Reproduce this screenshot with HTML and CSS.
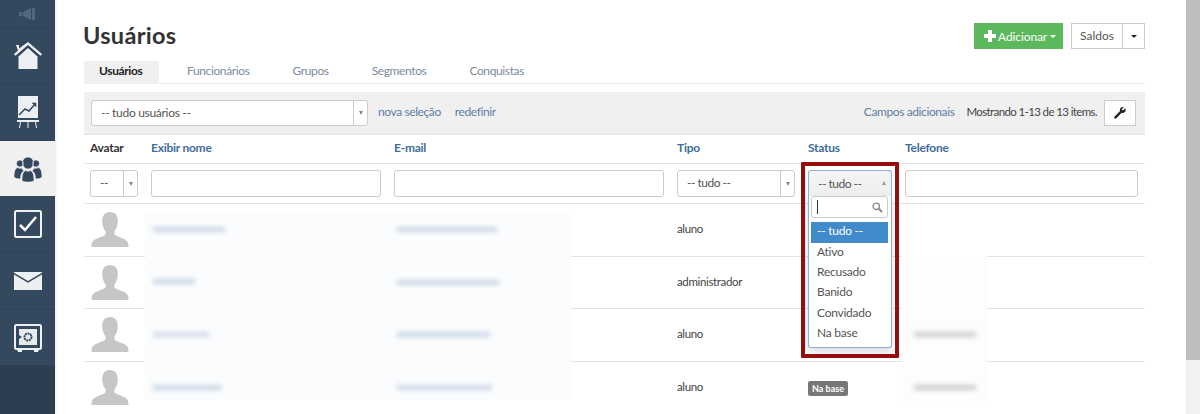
FILE: index.html
```html
<!DOCTYPE html>
<html lang="pt">
<head>
<meta charset="utf-8">
<title>Usuários</title>
<link rel="stylesheet" href="styles.css">
</head>
<body>
<div class="app">
  <nav class="sidebar">
    <div class="nav-item nav-top">
      <svg width="18" height="14" viewBox="0 0 18 14"><path class="ic-mute" d="M0 5h3v4H0zM4 5l8-4v12L4 9zM13 1h3v12h-3z"/></svg>
    </div>
    <div class="nav-item nav-home">
      <svg width="30" height="30" viewBox="0 0 30 30"><path class="ic-light" d="M3 4h3v3.5L15 1l14 12-1.500 1.800L15 4 2.500 14.800 1 13l4-3.400z"/><path class="ic-light" d="M5.500 15.500 15 7l9.500 8.500V28h-19z"/></svg>
    </div>
    <div class="nav-item nav-chart">
      <svg width="24" height="32" viewBox="0 0 24 32"><path class="ic-light" d="M2 0h20v22H2z"/><path class="ic-line" d="M3 19l6-6 4 2 6-7"/><path class="ic-line-thin" d="M16 7h4v4"/><path class="ic-light" d="M1 24h22v2H1zM4 26h1l-1 6H3zM11.500 26h1v6h-1zM19 26h1l1 6h-1z"/></svg>
    </div>
    <div class="nav-item nav-active">
      <svg width="30" height="26" viewBox="0 0 30 26"><path class="ic-dark" d="M7 4a3.500 3.500 0 1 1-.1 0zM23 4a3.500 3.500 0 1 1-.1 0zM15 1a5.500 5.500 0 0 1 5.500 6c0 3-2.500 6-5.500 6s-5.500-3-5.500-6A5.500 5.500 0 0 1 15 1z"/><path class="ic-dark" d="M1 21c0-5 1-9 4-9.500 1 1 3 1 3.800.5.700 1.500 1.500 2.500 2.200 3-2.500 1-3.500 4-3.500 8C4 23 2 22 1 21zM29 21c0-5-1-9-4-9.500-1 1-3 1-3.800.500-.7 1.500-1.500 2.500-2.200 3 2.500 1 3.500 4 3.500 8 3.500 0 5.500-1 6.500-2zM9 25c0-5 .5-9 3.500-10.500 1.500 1 3.500 1 5 0C20.500 16 21 20 21 25c-3 1.500-9 1.500-12 0z"/></svg>
    </div>
    <div class="nav-item nav-task">
      <svg width="28" height="28" viewBox="0 0 28 28"><rect class="ic-box" x="1" y="1" width="26" height="26" rx="1.500"/><path class="ic-check" d="M6 15l5 5L22 7"/></svg>
    </div>
    <div class="nav-item nav-mail">
      <svg width="28" height="18" viewBox="0 0 28 18"><path class="ic-light" d="M0 0h28v18H0z"/><path class="ic-v" d="M-1 1l15 9 15-9"/></svg>
    </div>
    <div class="nav-item nav-safe">
      <svg width="28" height="28" viewBox="0 0 28 28"><rect class="ic-safe" x="1" y="1" width="26" height="24" rx="1.500"/><rect class="ic-safe-in" x="5" y="5" width="18" height="16"/><circle class="ic-gear" cx="14" cy="13" r="3.500"/><path class="ic-dark-fill" d="M5 11l3 2-3 2z"/><path class="ic-light" d="M3 25h5v3H4zM20 25h5l-1 3h-4z"/></svg>
    </div>
  </nav>

  <main class="content">
    <header class="page-head">
      <h1 class="title">Usuários</h1>
      <div class="head-actions">
        <button class="btn-add">
          <svg width="12" height="12" viewBox="0 0 12 12"><path class="ic-white" d="M4 0h4v4h4v4H8v4H4V8H0V4h4z"/></svg>
          <span>Adicionar</span><i class="caret-white"></i>
        </button>
        <div class="split">
          <span class="split-main">Saldos</span>
          <span class="split-caret"><i class="caret-black"></i></span>
        </div>
      </div>
    </header>

    <ul class="tabs">
      <li class="tab tab-active">Usuários</li>
      <li class="tab">Funcionários</li>
      <li class="tab">Grupos</li>
      <li class="tab">Segmentos</li>
      <li class="tab">Conquistas</li>
    </ul>

    <section class="toolbar">
      <div class="select select-main">
        <span class="select-text">-- tudo usuários --</span>
        <span class="select-arrow"><i class="caret-gray"></i></span>
      </div>
      <a class="link link-first">nova seleção</a>
      <a class="link">redefinir</a>
      <div class="toolbar-right">
        <a class="link">Campos adicionais</a>
        <span class="summary">Mostrando 1-13 de 13 items.</span>
        <button class="btn-tool">
          <svg width="12" height="12" viewBox="0 0 14 14"><path class="ic-black" d="M13 1.500 10.500 4 9.500 3.500 9 2.500 11.500.2C9.500-.4 7.500.6 7 2.500c-.2.800-.1 1.500.1 2.200L.8 11c-.8.8-.8 1.500-.2 2.100.7.700 1.400.6 2.100-.1L9 6.700c2 .7 4-.3 4.500-2.300.2-.9 0-2-.5-2.900z"/></svg>
        </button>
      </div>
    </section>

    <section class="grid">
      <div class="grid-row head-row">
        <div class="th th-plain">Avatar</div>
        <div class="th">Exibir nome</div>
        <div class="th">E-mail</div>
        <div class="th">Tipo</div>
        <div class="th">Status</div>
        <div class="th">Telefone</div>
      </div>
      <div class="grid-row filter-row">
        <div class="cell"><div class="select select-small"><span class="select-text">--</span><span class="select-arrow"><i class="caret-gray"></i></span></div></div>
        <div class="cell"><div class="input"></div></div>
        <div class="cell"><div class="input"></div></div>
        <div class="cell"><div class="select"><span class="select-text">-- tudo --</span><span class="select-arrow"><i class="caret-gray"></i></span></div></div>
        <div class="cell"></div>
        <div class="cell"><div class="input input-last"></div></div>
      </div>
      <div class="grid-row body-row">
        <div class="cell"><svg class="avatar" viewBox="0 0 38 36"><path d="M19 0c5.500 0 8 4 8 9.500 0 4-1.500 8-3.500 10.500v3c1 1.500 4 2.500 8 4 4 1.500 6 3 6.500 6.500V36H0v-2.500c.5-3.500 2.500-5 6.500-6.500s7-2.500 8-4v-3C12.500 17.500 11 13.500 11 9.500 11 4 13.500 0 19 0z"/></svg></div>
        <div class="cell"></div><div class="cell"></div>
        <div class="cell cell-text">aluno</div>
      </div>
      <div class="grid-row body-row">
        <div class="cell"><svg class="avatar" viewBox="0 0 38 36"><path d="M19 0c5.500 0 8 4 8 9.500 0 4-1.500 8-3.500 10.500v3c1 1.500 4 2.500 8 4 4 1.500 6 3 6.500 6.500V36H0v-2.500c.5-3.500 2.500-5 6.500-6.500s7-2.500 8-4v-3C12.500 17.500 11 13.500 11 9.500 11 4 13.500 0 19 0z"/></svg></div>
        <div class="cell"></div><div class="cell"></div>
        <div class="cell cell-text">administrador</div>
      </div>
      <div class="grid-row body-row">
        <div class="cell"><svg class="avatar" viewBox="0 0 38 36"><path d="M19 0c5.500 0 8 4 8 9.500 0 4-1.500 8-3.500 10.500v3c1 1.500 4 2.500 8 4 4 1.500 6 3 6.500 6.500V36H0v-2.500c.5-3.500 2.500-5 6.500-6.500s7-2.500 8-4v-3C12.500 17.500 11 13.500 11 9.500 11 4 13.500 0 19 0z"/></svg></div>
        <div class="cell"></div><div class="cell"></div>
        <div class="cell cell-text">aluno</div>
      </div>
      <div class="grid-row body-row">
        <div class="cell"><svg class="avatar" viewBox="0 0 38 36"><path d="M19 0c5.500 0 8 4 8 9.500 0 4-1.500 8-3.500 10.500v3c1 1.500 4 2.500 8 4 4 1.500 6 3 6.500 6.500V36H0v-2.500c.5-3.500 2.500-5 6.500-6.500s7-2.500 8-4v-3C12.500 17.500 11 13.500 11 9.500 11 4 13.500 0 19 0z"/></svg></div>
        <div class="cell"></div><div class="cell"></div>
        <div class="cell cell-text">aluno</div>
        <div class="cell cell-text"><span class="badge">Na base</span></div>
      </div>

      <div class="mask mask-left">
        <i class="smear s1"></i><i class="smear s2"></i>
        <i class="smear s3"></i><i class="smear s4"></i>
        <i class="smear s5"></i><i class="smear s6"></i>
        <i class="smear s7"></i><i class="smear s8"></i>
      </div>
      <div class="mask mask-right">
        <i class="smear p1"></i><i class="smear p2"></i>
      </div>

      <div class="status-select">
        <div class="status-head"><span>-- tudo --</span><i class="caret-up"></i></div>
        <div class="status-panel">
          <div class="status-search">
            <i class="cursor"></i>
            <svg width="11" height="11" viewBox="0 0 11 11"><circle class="ic-search" cx="4.300" cy="4.300" r="3.200"/><path class="ic-search-h" d="M6.800 6.800 10 10"/></svg>
          </div>
          <ul class="status-list">
            <li class="opt opt-on">-- tudo --</li>
            <li class="opt">Ativo</li>
            <li class="opt">Recusado</li>
            <li class="opt">Banido</li>
            <li class="opt">Convidado</li>
            <li class="opt">Na base</li>
          </ul>
        </div>
      </div>
      <div class="annot"></div>
    </section>
  </main>

  <div class="scrollbar"><div class="scroll-thumb"></div></div>
</div>
</body>
</html>
```

FILE: styles.css
```css
* { box-sizing: border-box; }
html, body { margin: 0; padding: 0; height: 100%; overflow: hidden; background: #fff; }
body { font-family: Lato, "Liberation Sans", sans-serif; font-size: 12px; color: #444; }
ul { list-style: none; margin: 0; padding: 0; }
button { font-family: inherit; }
.app { display: flex; width: 1200px; height: 414px; overflow: hidden; }

/* sidebar */
.sidebar { width: 55px; flex: none; background: #2c3e50; box-shadow: 1px 0 3px rgba(0,0,0,.08); }
.nav-item { display: flex; align-items: center; justify-content: center; width: 55px; background: #34495e; border-bottom: 1px solid #2f4256; }
.nav-top { height: 28px; }
.nav-home { height: 56px; }
.nav-chart { height: 57px; }
.nav-active { height: 55px; background: #f0f0f0; border-bottom: 0; }
.nav-task { height: 57px; }
.nav-mail { height: 57px; }
.nav-safe { height: 55px; border-bottom: 0; }
.ic-mute { fill: #53687e; }
.ic-light { fill: #edf0f3; }
.ic-dark { fill: #34495e; stroke: #f0f0f0; stroke-width: .6; }
.ic-dark-fill { fill: #34495e; }
.ic-line { fill: none; stroke: #34495e; stroke-width: 1.500; }
.ic-line-thin { fill: #34495e; stroke: #34495e; stroke-width: .6; }
.ic-box { fill: #34495e; stroke: #edf0f3; stroke-width: 2; }
.ic-check { fill: none; stroke: #fff; stroke-width: 2.500; }
.ic-v { fill: none; stroke: #34495e; stroke-width: 1.500; }
.ic-safe { fill: #34495e; stroke: #edf0f3; stroke-width: 2; }
.ic-safe-in { fill: #e6ebf0; }
.ic-gear { fill: none; stroke: #34495e; stroke-width: 2; stroke-dasharray: 2 .6; }
.ic-white { fill: #fff; }
.ic-black { fill: #222; }
.ic-search { fill: none; stroke: #888; stroke-width: 1.400; }
.ic-search-h { fill: none; stroke: #888; stroke-width: 2; }

/* content */
.content { width: 1131px; flex: none; padding: 0 41px 0 29px; }
.page-head { display: flex; justify-content: space-between; align-items: flex-start; height: 61px; padding-top: 22px; }
.title { margin: 0 0 0 -1px; font-size: 23.500px; line-height: 26px; font-weight: 700; color: #333; letter-spacing: .3px; }
.head-actions { display: flex; gap: 8px; padding-top: 1px; }
.btn-add { display: flex; align-items: center; gap: 2px; width: 89px; height: 26px; padding: 0 0 0 10px; border: 0; background: #5cb85c; color: #fff; font-size: 12px; letter-spacing: -.1px; }
.caret-white { display: block; border: 3px solid transparent; border-top-color: #fff; border-bottom: 0; margin-left: 1px; }
.split { display: flex; height: 26px; border: 1px solid #ccc; color: #555; font-size: 12px; line-height: 23px; }
.split-main { width: 51px; text-align: center; border-right: 1px solid #ccc; }
.split-caret { width: 21px; display: flex; align-items: center; justify-content: center; }
.caret-black { display: block; border: 3.500px solid transparent; border-top-color: #222; border-bottom: 0; }

.tabs { display: flex; height: 23px; border-bottom: 1px solid #eee; }
.tab { padding: 0 15px; margin-right: 13px; height: 22px; line-height: 20px; color: #7d8c9b; font-size: 12px; letter-spacing: -.38px; white-space: nowrap; }
.tab-active { background: #f0f0f0; color: #222; font-weight: 700; letter-spacing: -.4px; width: 75px; }

.toolbar { display: flex; align-items: center; height: 43px; margin-top: 8px; padding: 0 9px 0 7px; background: #f0f0f0; border-bottom: 1px solid #e4e4e4; }
.select { display: flex; height: 27px; border: 1px solid #ccc; border-radius: 3px; background: #fff; width: 118px; color: #555; }
.select-main { width: 277px; height: 26px; }
.select-text { flex: 1; padding-left: 9px; line-height: 24px; font-size: 12px; letter-spacing: -.3px; }
.filter-row .select-text { line-height: 24px; letter-spacing: -.5px; }
.select-arrow { width: 14px; border-left: 1px solid #ccc; display: flex; align-items: center; justify-content: center; }
.caret-gray { display: block; border: 2.500px solid transparent; border-top: 4px solid #888; border-bottom: 0; }
.select-small { width: 48px; }
.link { color: #5d7ea3; font-size: 12px; margin-left: 14px; letter-spacing: -.4px; line-height: 15px; margin-bottom: 3px; }
.link-first { margin-left: 10px; }
.toolbar-right { margin-left: auto; display: flex; align-items: center; }
.summary { margin-left: 12px; margin-right: 7px; font-size: 11.500px; color: #444; letter-spacing: -.62px; margin-bottom: 3px; line-height: 15px; white-space: nowrap; }
.btn-tool { display: flex; align-items: center; justify-content: center; width: 32px; height: 26px; padding: 0; border: 1px solid #ccc; background: #fff; }

/* grid */
.grid { position: relative; }
.grid-row { display: grid; grid-template-columns: 61px 243px 283px 131px 97px 1fr; }
.head-row { height: 29px; border-bottom: 1px solid #e4e4e4; }
.th { padding: 5px 0 0 6px; font-size: 12px; font-weight: 700; color: #3f6d9c; line-height: 15px; letter-spacing: -.25px; }
.th-plain { color: #333; }
.filter-row { height: 40px; border-bottom: 1px solid #e4e4e4; }
.cell { padding-left: 6px; }
.filter-row .cell { padding-top: 6px; }
.input { height: 27px; width: 230px; border: 1px solid #ccc; border-radius: 3px; background: #fff; }
.filter-row .cell:nth-child(3) .input { width: 270px; }
.input-last { width: 233px; }
.body-row { height: 52.670px; border-bottom: 1px solid #e4e4e4; }
.body-row .cell:first-child { padding-top: 8px; }
.avatar { display: block; width: 38px; height: 35px; margin-left: 1px; fill: #c6c6c6; }
.cell-text { font-size: 11.500px; line-height: 49px; color: #444; letter-spacing: -.35px; }
.badge { display: inline-block; height: 15px; line-height: 15px; padding: 0 4px; background: #777; color: #fff; font-size: 9px; font-weight: 700; border-radius: 2px; vertical-align: middle; letter-spacing: 0; }

/* overlays */
.mask { position: absolute; background: #fbfcfd; }
.mask-left { left: 61px; top: 77px; width: 426px; height: 188px; }
.mask-right { left: 818px; top: 121px; width: 85px; height: 150px; background: #fdfdfd; }
.smear { position: absolute; height: 5px; background: #c9d5e5; filter: blur(2.500px); }
.s1 { left: 8px; top: 15px; width: 72px; }
.s2 { left: 252px; top: 15px; width: 100px; }
.s3 { left: 8px; top: 67px; width: 42px; }
.s4 { left: 252px; top: 68px; width: 102px; }
.s5 { left: 8px; top: 120px; width: 56px; background: #d2dae5; }
.s6 { left: 252px; top: 120px; width: 93px; }
.s7 { left: 8px; top: 173px; width: 68px; }
.s8 { left: 252px; top: 173px; width: 95px; }
.p1 { left: 12px; top: 76px; width: 62px; background: #cbcbcb; }
.p2 { left: 12px; top: 129px; width: 62px; background: #cbcbcb; }

.status-select { position: absolute; left: 724px; top: 35px; width: 84px; color: #555; }
.status-head { display: flex; align-items: center; justify-content: space-between; height: 28px; padding: 0 5px 3px 9px; border: 1px solid #8db3dc; border-bottom: 0; border-radius: 3px 3px 0 0; background: linear-gradient(#f5f5f5, #eee); font-size: 12px; letter-spacing: -.5px; }
.caret-up { display: block; border: 2.500px solid transparent; border-bottom: 4px solid #999; border-top: 0; }
.status-panel { height: 152px; margin-top: -2px; padding: 0 3px 0 2px; border: 1px solid #8db3dc; border-top: 0; border-radius: 0 0 3px 3px; background: #fff; box-shadow: 0 4px 8px rgba(0,0,0,.15); }
.status-search { display: flex; align-items: center; justify-content: space-between; height: 22px; padding: 0 4px 0 5px; border: 1px solid #ccc; border-radius: 3px; background: #fff; }
.cursor { display: block; width: 1px; height: 14px; background: #333; }
.status-list { margin-top: 4px; }
.opt { height: 20.200px; line-height: 18px; padding-left: 6px; font-size: 12px; color: #555; letter-spacing: -.25px; }
.opt-on { height: 21px; background: #428bca; color: #fff; }
.annot { position: absolute; left: 717px; top: 27px; width: 98px; height: 196px; border: 4px solid #960d0e; border-radius: 1px; }

/* scrollbar */
.scrollbar { width: 14px; flex: none; margin-left: 0; background: #f1f1f1; }
.scroll-thumb { height: 360px; background: #bdbdbd; }
```
